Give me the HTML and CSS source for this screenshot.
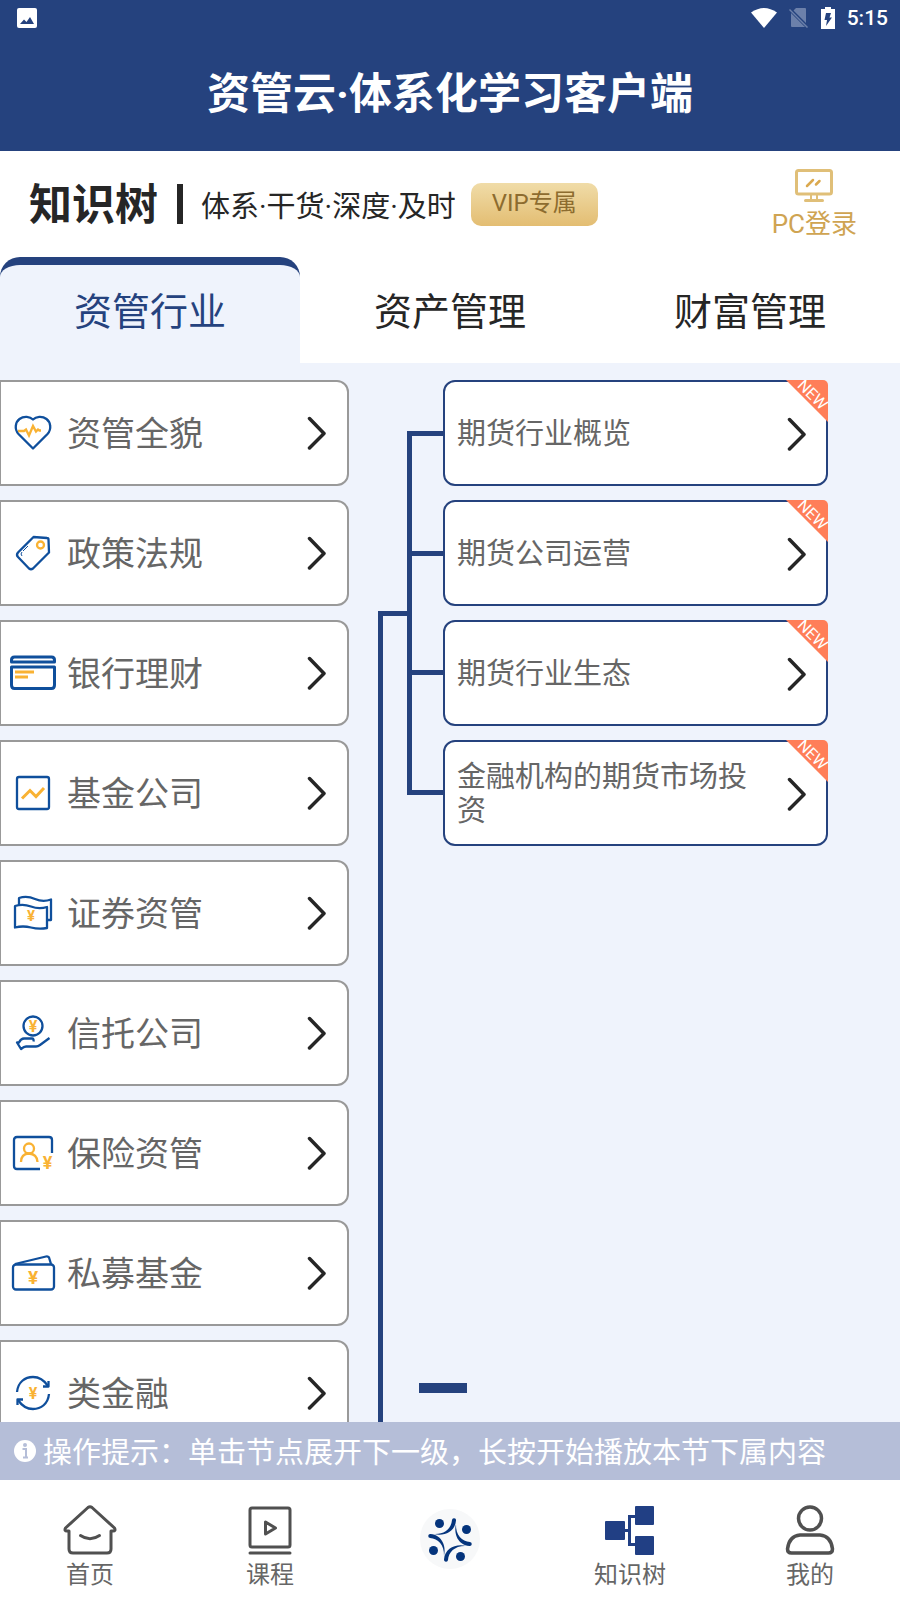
FILE: index.html
```html
<!DOCTYPE html>
<html lang="zh-CN">
<head>
    <meta charset="UTF-8">
    <meta name="viewport" content="width=device-width, initial-scale=1.0">
    <title>资管云·体系化学习客户端</title>
    <link rel="stylesheet" href="styles.css">
</head>
<body>
    <svg class="defs" width="0" height="0" aria-hidden="true">
        <symbol id="chevron" viewBox="0 0 20 34">
            <path d="M2.500 2.500L17 17.500L2.500 32" fill="none" stroke="#262626" stroke-width="3.500" stroke-linecap="round" stroke-linejoin="round"/>
        </symbol>
    </svg>

    <header class="header">
        <div class="status">
            <svg class="status-photo" width="20" height="20" viewBox="0 0 20 20">
                <rect width="20" height="20" rx="2" fill="#fff"/>
                <path d="M3 16l4-4.500 2.500 2.500 3.500-5 4 7z" fill="#25427e"/>
            </svg>
            <svg width="26" height="20" viewBox="0 0 26 20">
                <path d="M0 4.500Q13-4.500 26 4.500L13 20z" fill="#fff"/>
            </svg>
            <svg width="20" height="20" viewBox="0 0 20 20">
                <path d="M7 0h9q1 0 1 1v14L4.500 2.500zM2 5l14 14H3q-1 0-1-1z" fill="#6c80aa"/>
                <path d="M.500 1.500l18 18" stroke="#6c80aa" stroke-width="1.500"/>
            </svg>
            <svg width="14" height="22" viewBox="0 0 14 22">
                <path d="M0 2h4V0h6v2h4v20H0z" fill="#fff"/>
                <path d="M5 6h5l-1.500 4.500H11L5 19l1-6H3.500z" fill="#25427e"/>
            </svg>
            <span class="time">5:15</span>
        </div>
        <h1 class="title">资管云·体系化学习客户端</h1>
    </header>

    <section class="intro">
        <h2 class="intro-name">知识树</h2>
        <span class="intro-bar"></span>
        <p class="intro-text">体系·干货·深度·及时</p>
        <button type="button" class="vip">VIP专属</button>
        <a class="pc-login" href="#">
            <svg width="38" height="34" viewBox="0 0 38 34" fill="none" stroke="#e0bf78">
                <rect x="1.500" y="1.500" width="35" height="23.500" rx="2" stroke-width="3"/>
                <path d="M12 17l6-6M21 15.500l3.500-3.500" stroke="#dba94f" stroke-width="2.500" stroke-linecap="round"/>
                <path d="M16 25v6M22 25v6" stroke-width="2"/>
                <path d="M10.500 31.500h17" stroke-width="3" stroke-linecap="round"/>
            </svg>
            <span>PC登录</span>
        </a>
    </section>

    <div class="tabs" role="tablist">
        <button type="button" class="tab active" role="tab" aria-selected="true">资管行业</button>
        <button type="button" class="tab" role="tab" aria-selected="false">资产管理</button>
        <button type="button" class="tab" role="tab" aria-selected="false">财富管理</button>
    </div>

    <main class="tree">
        <ul class="roots">
            <li><button type="button" class="root">
                <svg class="icon" viewBox="0 0 46 36">
                    <path class="line" d="M23 33.500L8.500 19C4 14 5.500 7 9.500 4C14 .500 20 1.500 23 4.500C26 1.500 32 .500 36.500 4C40.500 7 42 14 37.500 19z"/>
                    <path class="mark" d="M8 16h6l2-1.500 3 6 4-9.500 3 5.500 2-2 1.500 1H31"/>
                </svg>
                <span>资管全貌</span>
                <svg class="chevron"><use href="#chevron"/></svg>
            </button></li>
            <li><button type="button" class="root">
                <svg class="icon" viewBox="0 0 46 36">
                    <path class="line" d="M23.500 2l13.500 1q1.500 0 1.500 1.500l.500 13-16 16q-2 1.500-4 0L8 22q-2-2 0-4.500z"/>
                    <circle class="mark" cx="30.500" cy="10" r="3.500"/>
                    <path class="line thin" d="M12 21q-2-2 0-4M13 16l5-5"/>
                </svg>
                <span>政策法规</span>
                <svg class="chevron"><use href="#chevron"/></svg>
            </button></li>
            <li><button type="button" class="root">
                <svg class="icon" viewBox="0 0 46 36">
                    <path class="line bold" d="M1.500 7V5q0-3 3-3h37q3 0 3 3v2z"/>
                    <path class="line bold" d="M1.500 12h43v18q0 3.500-3 3.500h-37q-3 0-3-3.500z"/>
                    <path class="mark bold" d="M5 17h19M5 22h13"/>
                </svg>
                <span>银行理财</span>
                <svg class="chevron"><use href="#chevron"/></svg>
            </button></li>
            <li><button type="button" class="root">
                <svg class="icon" viewBox="0 0 46 36">
                    <rect class="line" x="7" y="2" width="32" height="32" rx="2"/>
                    <path class="mark bold" d="M12 23.500l8-8 6 6 8-8.500"/>
                </svg>
                <span>基金公司</span>
                <svg class="chevron"><use href="#chevron"/></svg>
            </button></li>
            <li><button type="button" class="root">
                <svg class="icon" viewBox="0 0 46 36">
                    <path class="line" d="M5 11q8-2.500 16 .500t16 .500v21q-8 1.500-16-.500t-16 0z"/>
                    <path class="line" d="M9 9V3q8-2.500 16 1t16 .500V25h-4"/>
                    <text class="yen" x="21" y="26" font-size="15">¥</text>
                </svg>
                <span>证券资管</span>
                <svg class="chevron"><use href="#chevron"/></svg>
            </button></li>
            <li><button type="button" class="root">
                <svg class="icon" viewBox="0 0 46 36">
                    <circle class="line" cx="23" cy="11" r="9.500"/>
                    <text class="yen" x="23" y="17" font-size="16">¥</text>
                    <path class="line" d="M39.500 23L30 30q-2 1.500-4 1.500H16q-2 0-5 2.500l-4-6.500h2q2-4 5-4h8q2 0 1.500 3"/>
                </svg>
                <span>信托公司</span>
                <svg class="chevron"><use href="#chevron"/></svg>
            </button></li>
            <li><button type="button" class="root">
                <svg class="icon" viewBox="0 0 46 36">
                    <path class="line" d="M30 34H7q-3 0-3-3V5q0-3 3-3h32q3 0 3 3v13"/>
                    <circle class="mark" cx="19" cy="13.500" r="5"/>
                    <path class="mark" d="M11 27q0-8 8-8.500q8 .500 8.500 8.500"/>
                    <text class="yen" x="37.500" y="34" font-size="18">¥</text>
                </svg>
                <span>保险资管</span>
                <svg class="chevron"><use href="#chevron"/></svg>
            </button></li>
            <li><button type="button" class="root">
                <svg class="icon" viewBox="0 0 46 36">
                    <rect class="line" x="3" y="9.500" width="41" height="25" rx="3"/>
                    <path class="line" d="M5 9L36 1.500q2-.500 3 1L41 9"/>
                    <text class="yen" x="23" y="29" font-size="19">¥</text>
                </svg>
                <span>私募基金</span>
                <svg class="chevron"><use href="#chevron"/></svg>
            </button></li>
            <li><button type="button" class="root">
                <svg class="icon" viewBox="0 0 46 36">
                    <path class="line" d="M7 17C8 7 15 2 23 2q9 0 15 9M39 19C38 29 31 34 23 34q-9 0-15-9"/>
                    <path class="line" d="M38.500 6v5.500H33M7.500 30v-5.500H13"/>
                    <text class="yen" x="23" y="24" font-size="16">¥</text>
                </svg>
                <span>类金融</span>
                <svg class="chevron"><use href="#chevron"/></svg>
            </button></li>
        </ul>

        <div class="trunk"></div>

        <div class="branch">
            <div class="branch-row">
                <div class="bracket"><i></i><i></i></div>
                <ul class="nodes">
                    <li><button type="button" class="node">
                        <span>期货行业概览</span>
                        <svg class="chevron"><use href="#chevron"/></svg>
                        <span class="new"><b>NEW</b></span>
                    </button></li>
                    <li><button type="button" class="node">
                        <span>期货公司运营</span>
                        <svg class="chevron"><use href="#chevron"/></svg>
                        <span class="new"><b>NEW</b></span>
                    </button></li>
                    <li><button type="button" class="node">
                        <span>期货行业生态</span>
                        <svg class="chevron"><use href="#chevron"/></svg>
                        <span class="new"><b>NEW</b></span>
                    </button></li>
                    <li><button type="button" class="node">
                        <span>金融机构的期货市场投资</span>
                        <svg class="chevron"><use href="#chevron"/></svg>
                        <span class="new"><b>NEW</b></span>
                    </button></li>
                </ul>
            </div>
            <div class="dash"></div>
        </div>
    </main>

    <p class="tip">
        <svg width="22" height="22" viewBox="0 0 22 22">
            <circle cx="11" cy="11" r="11" fill="#fff"/>
            <circle cx="11" cy="5" r="2" fill="#b5bed8"/>
            <path d="M8.500 9h3.500v9M9 17.500h5" fill="none" stroke="#b5bed8" stroke-width="2"/>
        </svg>
        <span>操作提示：单击节点展开下一级，长按开始播放本节下属内容</span>
    </p>

    <nav class="nav">
        <a href="#">
            <svg width="54" height="50" viewBox="0 0 54 50" fill="none" stroke="#505050" stroke-width="3" stroke-linejoin="round" stroke-linecap="round">
                <path d="M25 2.500q2-1.500 4 0L51.500 23q1.500 3-1.500 3h-2v18q0 4-4 4H10q-4 0-4-4V26H4q-3 0-1.500-3z"/>
                <path d="M17.500 30.500q9.500 6.500 19 0"/>
            </svg>
            <span>首页</span>
        </a>
        <a href="#">
            <svg width="54" height="50" viewBox="0 0 54 50" fill="none" stroke="#505050" stroke-width="3" stroke-linejoin="round" stroke-linecap="round">
                <rect x="7" y="3" width="40" height="39" rx="2"/>
                <path d="M22.500 17v12l10-6zM7 48h40"/>
            </svg>
            <span>课程</span>
        </a>
        <a href="#" class="nav-logo" aria-label="资管云">
            <svg width="62" height="62" viewBox="0 0 62 62">
                <circle cx="31" cy="30" r="30" fill="#f7f8f9"/>
                <g fill="#04347c">
                    <g id="person">
                        <circle cx="20.500" cy="14.500" r="4.500"/>
                        <path d="M15 25C25 27.500 36 23 37 11.500a2 2 0 0 0-4-.500C32.500 19 26 25.500 15 25z"/>
                    </g>
                    <use href="#person" transform="rotate(90 31 31)"/>
                    <use href="#person" transform="rotate(180 31 31)"/>
                    <use href="#person" transform="rotate(270 31 31)"/>
                </g>
            </svg>
        </a>
        <a href="#">
            <svg width="54" height="50" viewBox="0 0 54 50" fill="#213f84">
                <rect x="2" y="16" width="20" height="19" rx="1"/>
                <rect x="32" y="1" width="19" height="19" rx="1"/>
                <rect x="32" y="31" width="19" height="19" rx="1"/>
                <path d="M22 25.500h5M33 11.500h-6.500v28H33" fill="none" stroke="#213f84" stroke-width="3"/>
            </svg>
            <span>知识树</span>
        </a>
        <a href="#">
            <svg width="54" height="50" viewBox="0 0 54 50" fill="none" stroke="#505050" stroke-width="3.500">
                <circle cx="27" cy="13.500" r="11.500"/>
                <path d="M17 30h20Q48 31 49.500 44q0 4-4 4h-37q-4 0-4-4Q6 31 17 30z"/>
            </svg>
            <span>我的</span>
        </a>
    </nav>
</body>
</html>
```
FILE: styles.css
```css
* {
    box-sizing: border-box;
}
body {
    margin: 0;
    height: 100vh;
    display: flex;
    flex-direction: column;
    font-family: Roboto, "Noto Sans CJK SC", sans-serif;
    background-color: #fff;
    color: #262626;
}
h1, h2, p, ul {
    margin: 0;
    padding: 0;
}
ul {
    list-style: none;
}
a {
    color: inherit;
    text-decoration: none;
}
button {
    margin: 0;
    padding: 0;
    border: none;
    background: none;
    font-family: inherit;
    color: inherit;
    cursor: pointer;
}
.defs {
    position: absolute;
}

/* Header */
.header {
    background-color: #25427e;
    color: #fff;
    padding-bottom: 24px;
}
.status {
    display: flex;
    align-items: center;
    gap: 12px;
    height: 36px;
    padding: 0 12px 0 17px;
}
.status-photo {
    margin-right: auto;
}
.time {
    font-size: 21px;
    font-weight: 500;
}
.title {
    padding-top: 26px;
    font-size: 43px;
    font-weight: 700;
    line-height: 65px;
    text-align: center;
}

/* Intro line */
.intro {
    display: flex;
    align-items: center;
    height: 106px;
    padding: 0 43px 0 29px;
}
.intro-name {
    padding-top: 2px;
    font-size: 43px;
    font-weight: 700;
    line-height: 60px;
}
.intro-bar {
    width: 6px;
    height: 40px;
    margin: 0 18px 0 19px;
    background-color: #262626;
}
.intro-text {
    font-size: 29px;
}
.vip {
    height: 43px;
    margin-left: 15px;
    padding: 0 21px 2px;
    border-radius: 10px;
    background: linear-gradient(#f0dca8, #e3bd72);
    color: #8d6c2f;
    font-size: 24px;
    line-height: 36px;
}
.pc-login {
    display: flex;
    flex-direction: column;
    align-items: center;
    gap: 4px;
    padding-top: 2px;
    margin-left: auto;
    color: #cfa452;
    font-size: 26px;
    line-height: 34px;
}

/* Tabs */
.tabs {
    display: flex;
    height: 106px;
}
.tab {
    flex: 1;
    padding-bottom: 12px;
    border-top: 8px solid transparent;
    font-size: 38px;
}
.tab.active {
    border-top-color: #25427e;
    border-radius: 20px 20px 0 0;
    background-color: #eff3fc;
    color: #25427e;
}

/* Tree */
.tree {
    flex: 1;
    min-height: 0;
    display: flex;
    padding: 17px 72px 0 0;
    overflow: hidden;
    background-color: #eff3fc;
}
.roots {
    flex: 10 1 0;
}
.roots, .nodes {
    display: flex;
    flex-direction: column;
    gap: 14px;
}
.root, .node {
    display: flex;
    align-items: center;
    width: 100%;
    height: 106px;
    background-color: #fff;
    color: #666;
    text-align: left;
}
.root {
    padding: 0 20px 0 9px;
    border: 2px solid #999;
    border-left-width: 1px;
    border-radius: 0 12px 12px 0;
    font-size: 34px;
}
.root span {
    padding-bottom: 3px;
}
.icon {
    width: 46px;
    height: 36px;
    margin-right: 11px;
    overflow: visible;
}
.line {
    fill: none;
    stroke: #0f4f9c;
    stroke-width: 2.3;
    stroke-linejoin: round;
}
.mark {
    fill: none;
    stroke: #f9b233;
    stroke-width: 2.3;
}
.thin {
    stroke-width: 1;
}
.bold {
    stroke-width: 3;
}
.yen {
    fill: #f9b233;
    font-weight: 700;
    text-anchor: middle;
}
.chevron {
    flex: none;
    width: 20px;
    height: 34px;
    margin-left: auto;
}
.trunk {
    width: 29px;
    margin: 231px 0 0 29px;
    border: solid #25427e;
    border-width: 5px 0 0 5px;
}
.branch {
    flex: 11 1 37px;
    display: flex;
    flex-direction: column;
}
.branch-row {
    display: flex;
}
.bracket {
    flex: none;
    display: flex;
    flex-direction: column;
    justify-content: space-evenly;
    width: 36px;
    margin: 51px 0;
    border: 5px solid #25427e;
    border-right: none;
}
.bracket i {
    height: 5px;
    background-color: #25427e;
}
.nodes {
    flex: 1;
}
.node {
    position: relative;
    padding: 2px 19px 0 12px;
    border: 2px solid #25427e;
    border-radius: 12px;
    font-size: 29px;
    line-height: 34px;
}
.node .chevron {
    margin-left: 36px;
}
.node span:first-child {
    flex: 1;
}
/* Corner ribbon */
.new {
    position: absolute;
    top: -2px;
    right: -2px;
    display: flex;
    align-items: center;
    justify-content: center;
    width: 42px;
    height: 42px;
    padding: 0 0 12px 10px;
    border-radius: 0 5px 0 0;
    background-color: #ff7e58;
    clip-path: polygon(0 0, 100% 0, 100% 100%);
    color: #fff;
}
.new b {
    font-size: 16px;
    font-weight: 400;
    transform: rotate(45deg);
}
.dash {
    width: 48px;
    height: 10px;
    margin: auto 0 29px 12px;
    background-color: #25427e;
}

/* Tip */
.tip {
    display: flex;
    align-items: center;
    gap: 7px;
    height: 58px;
    padding-left: 14px;
    background-color: #b5bed8;
    color: #fff;
    font-size: 29px;
}
.tip span {
    padding-bottom: 2px;
}

/* Bottom nav */
.nav {
    display: flex;
    height: 120px;
    color: #666;
    font-size: 24px;
    line-height: 34px;
}
.nav a {
    flex: 1;
    display: flex;
    flex-direction: column;
    align-items: center;
    gap: 3px;
    padding-top: 25px;
}
.nav .nav-logo {
    padding-top: 29px;
}
```
